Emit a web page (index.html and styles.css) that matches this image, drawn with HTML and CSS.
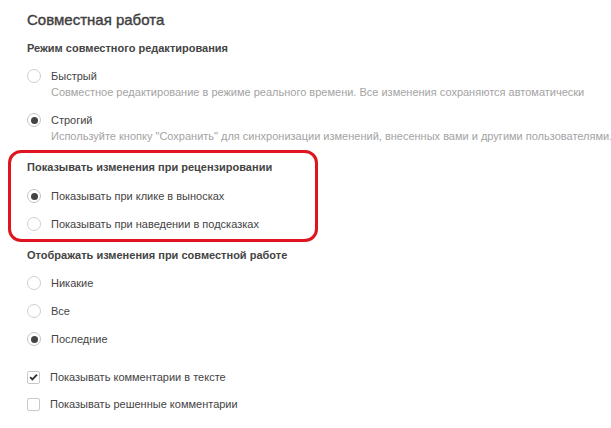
FILE: index.html
```html
<!DOCTYPE html>
<html lang="ru">
<head>
<meta charset="utf-8">
<title>Совместная работа</title>
<link rel="stylesheet" href="styles.css">
</head>
<body>
<div class="page">
  <h1 class="title">Совместная работа</h1>

  <div class="section-label">Режим совместного редактирования</div>
  <div class="option first">
    <span class="radio"></span>
    <span class="label">Быстрый</span>
  </div>
  <div class="desc">Совместное редактирование в режиме реального времени. Все изменения сохраняются автоматически</div>
  <div class="option">
    <span class="radio checked"></span>
    <span class="label">Строгий</span>
  </div>
  <div class="desc">Используйте кнопку "Сохранить" для синхронизации изменений, внесенных вами и другими пользователями.</div>

  <div class="highlight">
    <div class="section-label">Показывать изменения при рецензировании</div>
    <div class="option first">
      <span class="radio checked"></span>
      <span class="label">Показывать при клике в выносках</span>
    </div>
    <div class="option">
      <span class="radio"></span>
      <span class="label">Показывать при наведении в подсказках</span>
    </div>
  </div>

  <div class="section-label after-box">Отображать изменения при совместной работе</div>
  <div class="option first">
    <span class="radio"></span>
    <span class="label">Никакие</span>
  </div>
  <div class="option">
    <span class="radio"></span>
    <span class="label">Все</span>
  </div>
  <div class="option">
    <span class="radio checked"></span>
    <span class="label">Последние</span>
  </div>

  <div class="option check-first">
    <span class="checkbox"><svg viewBox="0 0 12 12" width="12" height="12"><path d="M2.3 6.2 L4.8 8.7 L9.8 3.4" fill="none" stroke="#333" stroke-width="2"/></svg></span>
    <span class="label">Показывать комментарии в тексте</span>
  </div>
  <div class="option check">
    <span class="checkbox"></span>
    <span class="label">Показывать решенные комментарии</span>
  </div>
</div>
</body>
</html>
```

FILE: styles.css
```css
html, body {
  margin: 0;
  padding: 0;
  background: #fff;
}
body {
  font-family: "Liberation Sans", Arial, sans-serif;
  font-size: 11px;
  color: #444;
  overflow: hidden;
}
.page {
  padding: 10px 0 0 27px;
  width: 584px;
}
.title {
  margin: 0;
  font-size: 15px;
  line-height: 20px;
  font-weight: normal;
  color: #3f3f3f;
  -webkit-text-stroke: 0.4px #3f3f3f;
}
.section-label {
  margin-top: 10px;
  font-weight: bold;
  line-height: 16px;
  color: #444;
}
.option {
  display: flex;
  align-items: center;
  height: 16px;
  margin-top: 12px;
}
.label {
  line-height: 16px;
  white-space: nowrap;
}
.desc {
  padding-left: 24px;
  line-height: 16px;
  color: #a3a3a3;
  white-space: nowrap;
}
.radio {
  box-sizing: border-box;
  width: 14px;
  height: 14px;
  border: 1px solid #cfcfcf;
  border-radius: 50%;
  margin-right: 10px;
  flex: none;
  display: flex;
  align-items: center;
  justify-content: center;
  background: #fff;
}
.radio.checked {
  border-color: #c4c4c4;
}
.radio.checked::after {
  content: "";
  width: 7px;
  height: 7px;
  border-radius: 50%;
  background: #444;
}
.highlight {
  margin: 6px 0 0 -19px;
  width: 310px;
  box-sizing: border-box;
  border: 3px solid #e0141e;
  border-radius: 13px;
  padding: 6px 0 7px 16px;
}
.highlight .section-label {
  margin-top: 0;
}
.highlight .option.first {
  margin-top: 13px;
}
.section-label.after-box {
  margin-top: 5px;
}
.check-first {
  margin-top: 22px;
}
.check {
  margin-top: 11px;
}
.checkbox {
  box-sizing: border-box;
  width: 13px;
  height: 13px;
  border: 1px solid #c8c8c8;
  border-radius: 2px;
  margin-right: 10px;
  flex: none;
  display: flex;
  align-items: center;
  justify-content: center;
}
.checkbox svg {
  display: block;
}
```
